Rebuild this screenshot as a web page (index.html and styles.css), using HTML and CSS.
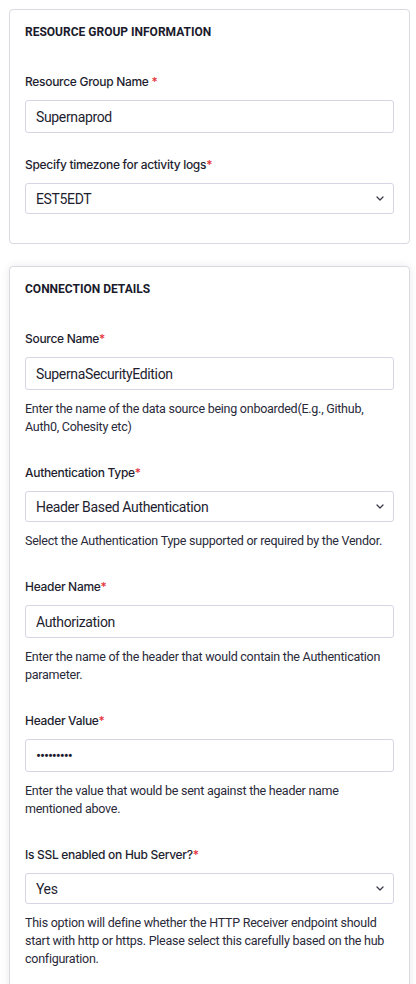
FILE: index.html
```html
<!DOCTYPE html>
<html lang="en">
<head>
<meta charset="utf-8">
<title>Resource Group</title>
<link rel="stylesheet" href="styles.css">
</head>
<body>
<div class="page">
  <section class="card card-first">
    <h2 class="card-title">RESOURCE GROUP INFORMATION</h2>
    <div class="field">
      <label class="label">Resource Group Name <span class="req">*</span></label>
      <input class="control" type="text" value="Supernaprod">
    </div>
    <div class="field">
      <label class="label">Specify timezone for activity logs<span class="req">*</span></label>
      <div class="select-wrap">
        <select class="control select"><option>EST5EDT</option></select>
        <svg class="chev" width="8" height="5" viewBox="0 0 8 5"><path d="M1 1 L4 4 L7 1" fill="none" stroke="#3a3a4a" stroke-width="1.3" stroke-linecap="round" stroke-linejoin="round"/></svg>
      </div>
    </div>
  </section>

  <section class="card card-shadow">
    <h2 class="card-title">CONNECTION DETAILS</h2>
    <div class="field">
      <label class="label">Source Name<span class="req">*</span></label>
      <input class="control" type="text" value="SupernaSecurityEdition">
      <p class="help">Enter the name of the data source being onboarded(E.g., Github, Auth0, Cohesity etc)</p>
    </div>
    <div class="field">
      <label class="label">Authentication Type<span class="req">*</span></label>
      <div class="select-wrap">
        <select class="control select"><option>Header Based Authentication</option></select>
        <svg class="chev" width="8" height="5" viewBox="0 0 8 5"><path d="M1 1 L4 4 L7 1" fill="none" stroke="#3a3a4a" stroke-width="1.3" stroke-linecap="round" stroke-linejoin="round"/></svg>
      </div>
      <p class="help">Select the Authentication Type supported or required by the Vendor.</p>
    </div>
    <div class="field">
      <label class="label">Header Name<span class="req">*</span></label>
      <input class="control" type="text" value="Authorization">
      <p class="help">Enter the name of the header that would contain the Authentication parameter.</p>
    </div>
    <div class="field">
      <label class="label">Header Value<span class="req">*</span></label>
      <div class="control dots">•••••••••</div>
      <p class="help">Enter the value that would be sent against the header name mentioned above.</p>
    </div>
    <div class="field">
      <label class="label">Is SSL enabled on Hub Server?<span class="req">*</span></label>
      <div class="select-wrap">
        <select class="control select"><option>Yes</option></select>
        <svg class="chev" width="8" height="5" viewBox="0 0 8 5"><path d="M1 1 L4 4 L7 1" fill="none" stroke="#3a3a4a" stroke-width="1.3" stroke-linecap="round" stroke-linejoin="round"/></svg>
      </div>
      <p class="help">This option will define whether the HTTP Receiver endpoint should start with http or https. Please select this carefully based on the hub configuration.</p>
    </div>
  </section>
</div>
</body>
</html>
```
FILE: styles.css
```css
* { box-sizing: border-box; }
html, body { margin: 0; padding: 0; background: #ffffff; }
body {
  font-family: Roboto, "Liberation Sans", Arial, sans-serif;
  color: #1e1e30;
}
.page {
  padding: 9px 0 0 9px;
  display: flex;
  flex-direction: column;
  gap: 22px;
}
.card {
  width: 401px;
  border: 1px solid #d9d9e2;
  border-radius: 4px;
  background: #fff;
  padding: 14px 15px 30px 15px;
}
.card-first { padding-bottom: 29px; }
.card-shadow {
  box-shadow: 0 0 8px rgba(0, 0, 0, 0.09);
}
.card-title {
  margin: 0 0 33px 0;
  font-family: Roboto, sans-serif;
  font-size: 12px;
  line-height: 16px;
  font-weight: 700;
  color: #1a1a2c;
}
.field { display: flex; flex-direction: column; }
.field + .field { margin-top: 23px; }
.field:has(.help) + .field { margin-top: 28px; }
.label {
  display: block;
  font-family: Inter, Roboto, sans-serif;
  font-size: 12px;
  letter-spacing: -0.3px;
  line-height: 18px;
  font-weight: 500;
  color: #1e1e30;
  margin-bottom: 9px;
}
.req { color: #e5323b; }
.control {
  display: block;
  width: 100%;
  height: 33px;
  margin: 0;
  padding: 0 10px;
  border: 1px solid #d6d5e3;
  border-radius: 3px;
  background: #fff;
  font-family: Roboto, "Liberation Sans", sans-serif;
  font-size: 14px;
  letter-spacing: -0.35px;
  color: #1e1e30;
  outline: none;
}
.select-wrap { position: relative; }
.select {
  height: 31px;
  appearance: none;
  -webkit-appearance: none;
  padding: 0 30px 0 10px;
}
.chev {
  position: absolute;
  right: 10px;
  top: 13px;
}
.dots {
  display: flex;
  align-items: center;
  font-size: 15px;
  letter-spacing: -1.1px;
}
.help {
  margin: 10px 0 0 0;
  font-size: 12.5px;
  letter-spacing: -0.25px;
  line-height: 18px;
  color: #2a2a3a;
}
```
